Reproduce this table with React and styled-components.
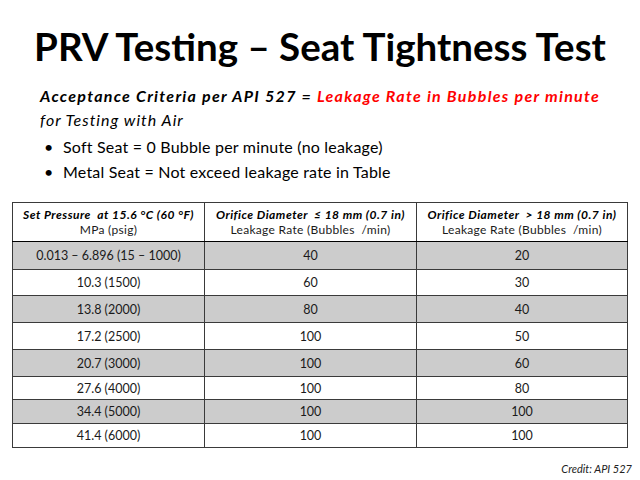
import React from 'react';
import styled, { createGlobalStyle } from 'styled-components';

const GlobalStyle = createGlobalStyle`
  html, body {
    margin: 0;
    padding: 0;
    background: #ffffff;
  }
  body {
    font-family: Lato, "Open Sans", sans-serif;
    color: #000;
  }
`;

const Slide = styled.div`
  width: 640px;
  height: 480px;
  overflow: hidden;
  display: flex;
  flex-direction: column;
  background: #fff;
`;

const Title = styled.h1`
  margin: 0;
  padding-top: 23px;
  font-size: 38.5px;
  line-height: 46px;
  font-weight: 700;
  text-align: center;
  color: #000;
`;

const Criteria = styled.div`
  margin-top: 15px;
  padding-left: 40px;
  font-size: 16px;
  line-height: 24px;
  font-style: italic;
  letter-spacing: 1px;
`;

const Strong = styled.span`
  font-weight: 700;
  letter-spacing: 1.3px;
  color: ${(p) => (p.$red ? '#ff0000' : '#000')};
`;

const BulletList = styled.ul`
  list-style: none;
  margin: 2px 0 0;
  padding: 0 0 0 44px;
`;

const Bullet = styled.li`
  display: flex;
  font-size: 16px;
  line-height: 25px;
  letter-spacing: 0.2px;

  &::before {
    content: '•';
    width: 19px;
    flex: none;
  }
`;

const Table = styled.table`
  margin: 18px 0 0 12px;
  width: 615px;
  border-collapse: collapse;
  table-layout: fixed;
  color: #1a1a1a;
`;

const HeadCell = styled.th`
  border: 1px solid #3a3a3a;
  border-bottom-color: #000;
  font-weight: 400;
  font-size: 12px;
  letter-spacing: 0.3px;
  padding: 0;
  height: 38px;
  line-height: 15px;
  text-align: center;
  vertical-align: middle;
`;

const HeadTitle = styled.div`
  font-weight: 700;
  font-style: italic;
  letter-spacing: 0.5px;
  color: #000;
`;

const Row = styled.tr`
  background: ${(p) => (p.$shaded ? '#cccccc' : '#ffffff')};
`;

const Cell = styled.td`
  border: 1px solid #3a3a3a;
  padding: 0;
  height: ${(p) => p.$h}px;
  text-align: center;
  vertical-align: middle;
  font-size: 12.5px;
`;

const Credit = styled.div`
  margin-top: auto;
  padding: 0 8px 4px 0;
  text-align: right;
  font-size: 11px;
  line-height: 14px;
  font-style: italic;
  color: #222;
`;

const rows = [
  ['0.013 – 6.896 (15 – 1000)', 40, 20, 27],
  ['10.3 (1500)', 60, 30, 25],
  ['13.8 (2000)', 80, 40, 26],
  ['17.2 (2500)', 100, 50, 26],
  ['20.7 (3000)', 100, 60, 26],
  ['27.6 (4000)', 100, 80, 22],
  ['34.4 (5000)', 100, 100, 23],
  ['41.4 (6000)', 100, 100, 23],
];

export default function App() {
  return (
    <>
      <GlobalStyle />
      <Slide>
        <Title>PRV Testing – Seat Tightness Test</Title>
        <Criteria>
          <Strong>Acceptance Criteria per API 527 = </Strong>
          <Strong $red>Leakage Rate in Bubbles per minute</Strong>
          <br />
          for Testing with Air
        </Criteria>
        <BulletList>
          <Bullet>Soft Seat = 0 Bubble per minute (no leakage)</Bullet>
          <Bullet>Metal Seat = Not exceed leakage rate in Table</Bullet>
        </BulletList>
        <Table>
          <colgroup>
            <col style={{ width: 192 }} />
            <col style={{ width: 212 }} />
            <col style={{ width: 211 }} />
          </colgroup>
          <thead>
            <tr>
              <HeadCell>
                <HeadTitle>Set Pressure &nbsp;at 15.6 °C (60 °F)</HeadTitle>
                MPa (psig)
              </HeadCell>
              <HeadCell>
                <HeadTitle>Orifice Diameter &nbsp;≤ 18 mm (0.7 in)</HeadTitle>
                Leakage Rate (Bubbles &nbsp;/min)
              </HeadCell>
              <HeadCell>
                <HeadTitle>Orifice Diameter &nbsp;&gt; 18 mm (0.7 in)</HeadTitle>
                Leakage Rate (Bubbles &nbsp;/min)
              </HeadCell>
            </tr>
          </thead>
          <tbody>
            {rows.map(([pressure, small, large, h], i) => (
              <Row key={pressure} $shaded={i % 2 === 0}>
                <Cell $h={h}>{pressure}</Cell>
                <Cell $h={h}>{small}</Cell>
                <Cell $h={h}>{large}</Cell>
              </Row>
            ))}
          </tbody>
        </Table>
        <Credit>Credit: API 527</Credit>
      </Slide>
    </>
  );
}
